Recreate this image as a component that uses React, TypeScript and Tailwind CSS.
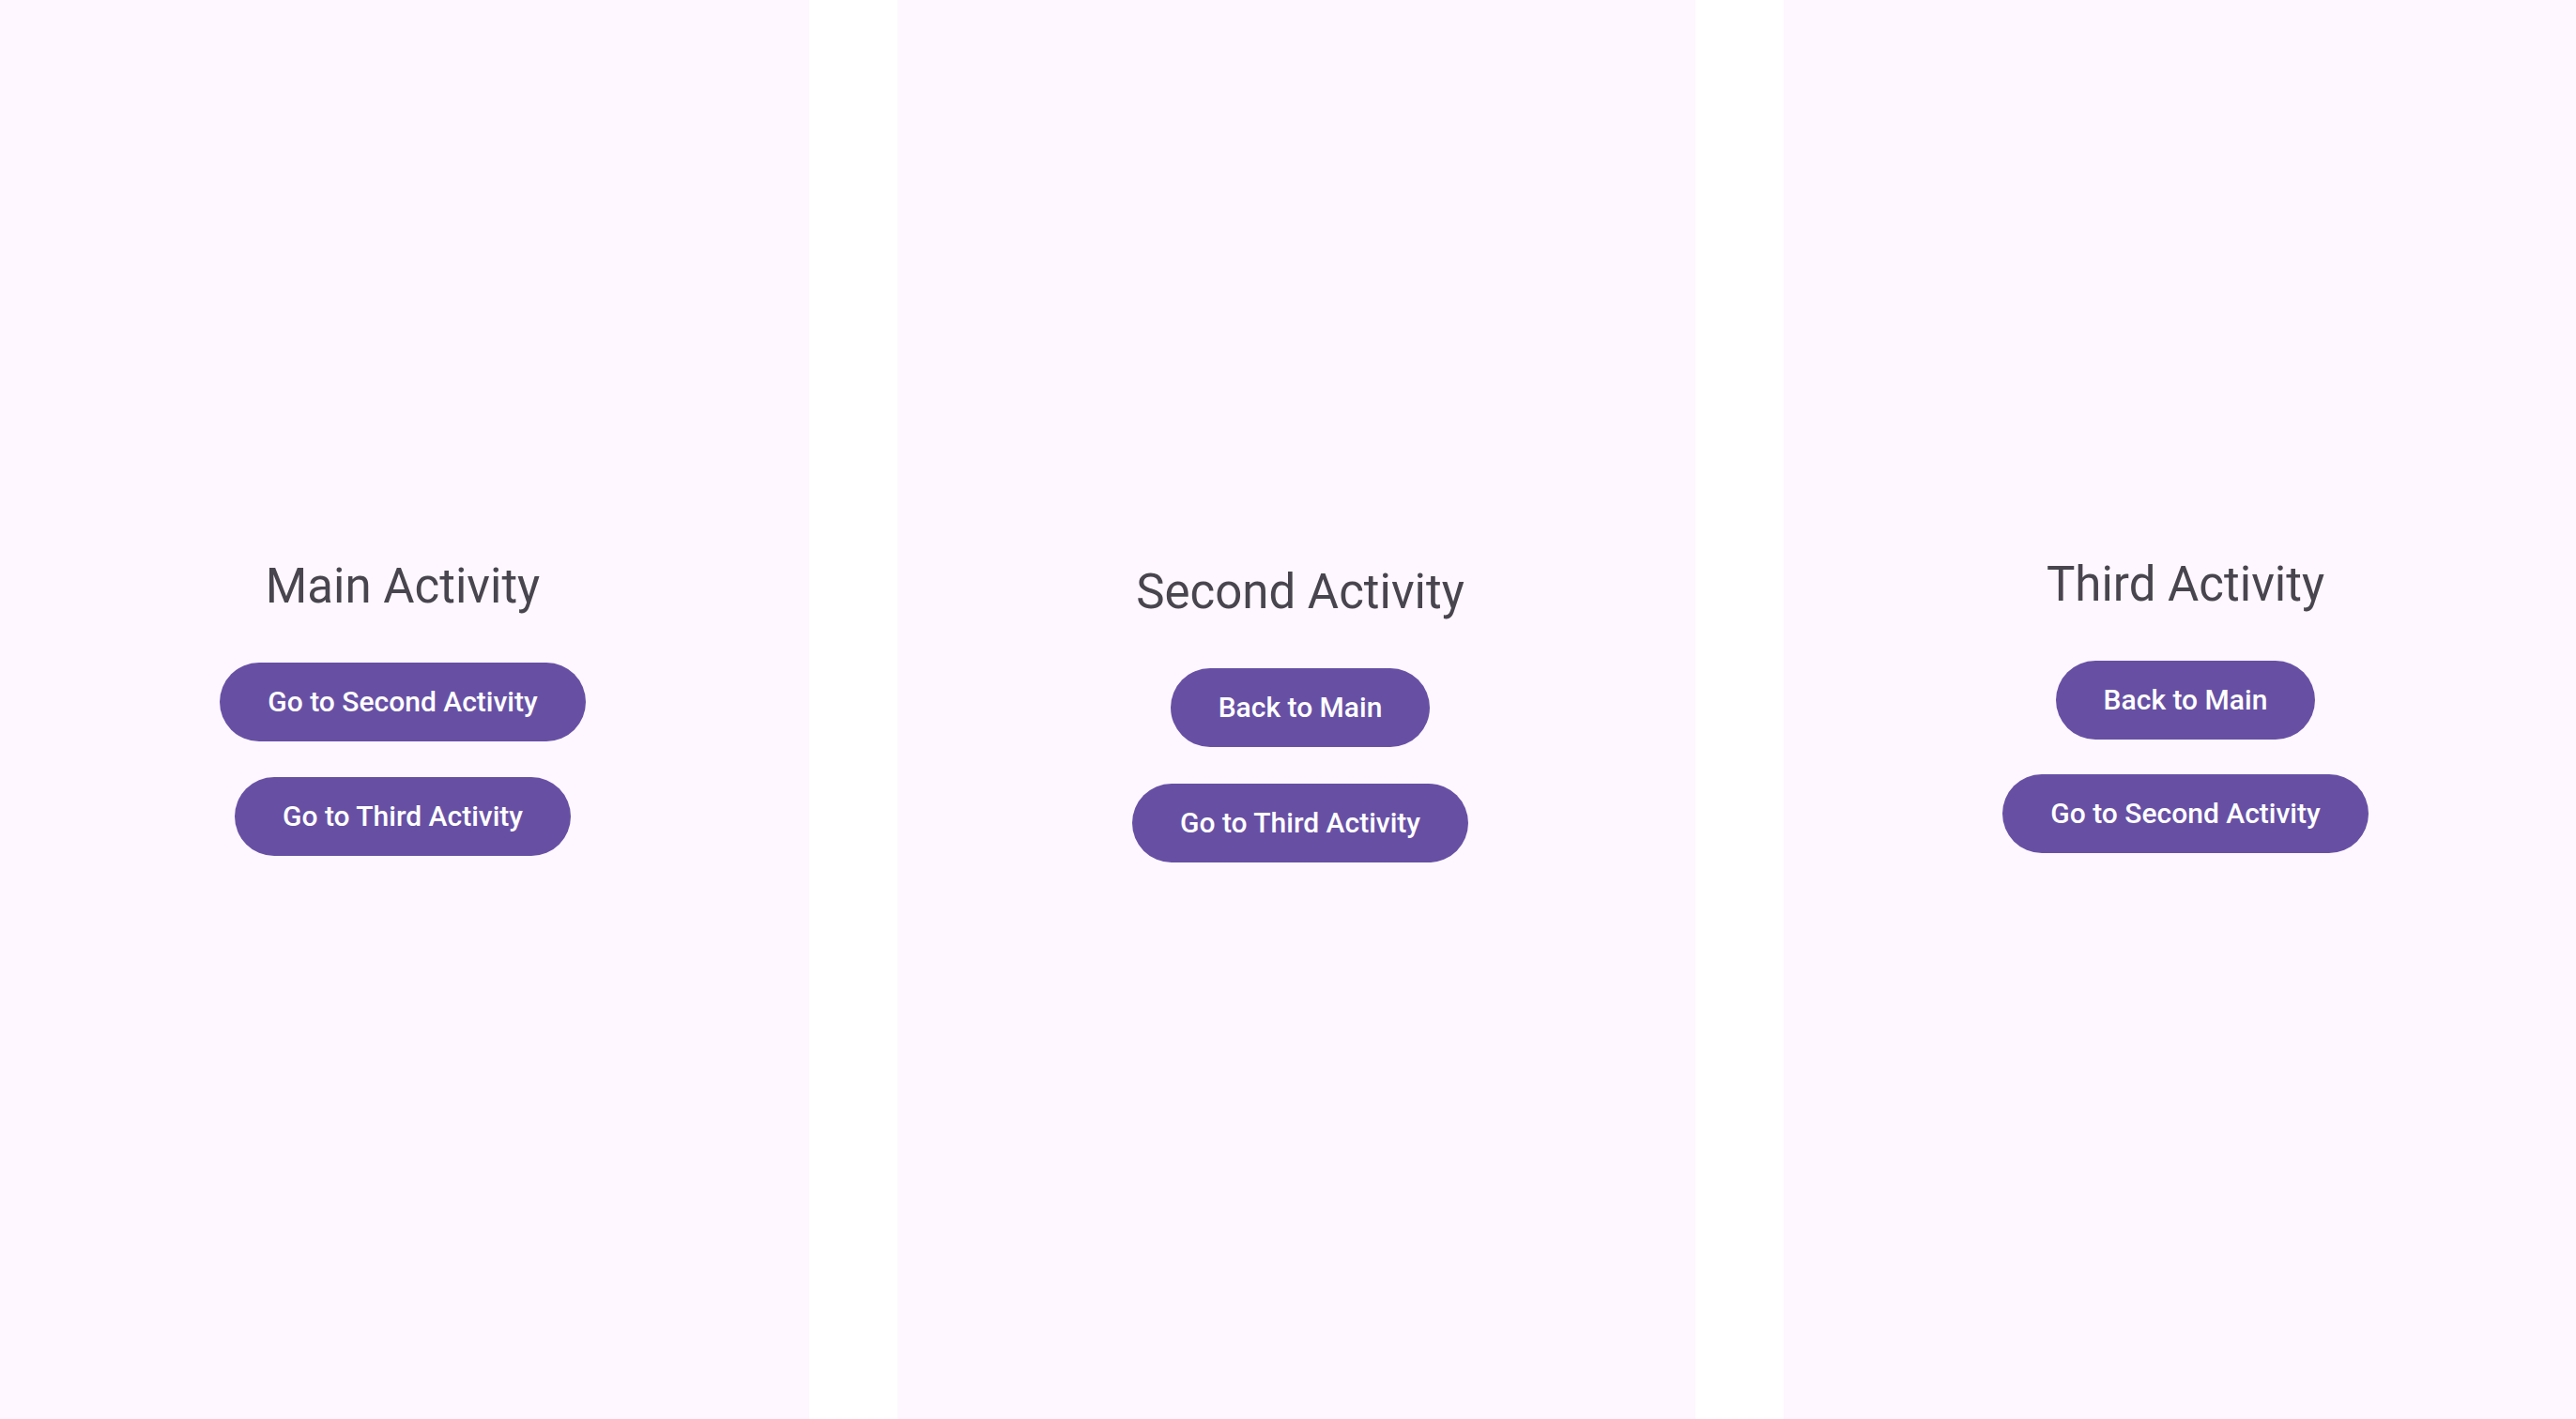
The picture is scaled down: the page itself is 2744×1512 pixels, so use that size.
import React from "react";

function Btn({ label }: { label: string }) {
  return (
    <button className="h-[84px] rounded-full bg-[#6750A4] px-[51px] text-[30px] font-medium leading-none tracking-[0px] text-white">
      {label}
    </button>
  );
}

function Panel({
  title,
  buttons,
  cls,
  gap,
}: {
  title: string;
  buttons: string[];
  cls: string;
  gap: string;
}) {
  return (
    <div className={`flex h-full flex-col items-center bg-[#FEF7FF] ${cls}`}>
      <h1 className="text-[51px] font-normal leading-[60px] text-[#49454F]">{title}</h1>
      <div className={`mt-[51px] flex flex-col items-center ${gap}`}>
        {buttons.map((b) => (
          <Btn key={b} label={b} />
        ))}
      </div>
    </div>
  );
}

export default function App() {
  return (
    <div
      className="flex h-[1512px] w-[2744px] overflow-hidden bg-white"
      style={{ fontFamily: "Roboto, 'Noto Sans', sans-serif" }}
    >
      <Panel
        title="Main Activity"
        buttons={["Go to Second Activity", "Go to Third Activity"]}
        cls="w-[862px] shrink-0 pt-[595px] pr-[4px]"
        gap="gap-[38px]"
      />
      <div className="w-[94px] shrink-0" />
      <Panel
        title="Second Activity"
        buttons={["Back to Main", "Go to Third Activity"]}
        cls="w-[850px] shrink-0 pt-[601px] pl-[8px]"
        gap="gap-[39px]"
      />
      <div className="w-[94px] shrink-0" />
      <Panel
        title="Third Activity"
        buttons={["Back to Main", "Go to Second Activity"]}
        cls="w-[844px] shrink-0 pt-[593px] pl-[12px]"
        gap="gap-[37px]"
      />
    </div>
  );
}
